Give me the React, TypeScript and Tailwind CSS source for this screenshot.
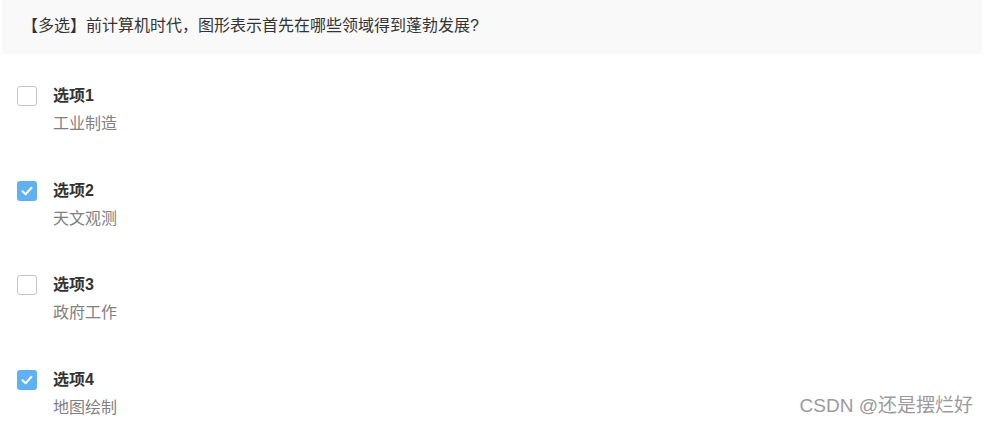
import React from 'react';

const options = [
  { label: '选项1', desc: '工业制造', checked: false },
  { label: '选项2', desc: '天文观测', checked: true },
  { label: '选项3', desc: '政府工作', checked: false },
  { label: '选项4', desc: '地图绘制', checked: true },
];

function Checkbox({ checked }: { checked: boolean }) {
  if (checked) {
    return (
      <div className="flex h-[20px] w-[20px] shrink-0 items-center justify-center rounded-[3px] bg-[#5eb1f3]">
        <svg width="14" height="14" viewBox="0 0 14 14" fill="none">
          <path d="M2.5 7.2 L5.6 10.2 L11.5 3.8" stroke="#fff" strokeWidth="2" strokeLinecap="round" strokeLinejoin="round" />
        </svg>
      </div>
    );
  }
  return <div className="h-[20px] w-[20px] shrink-0 rounded-[3px] border border-[#c4c4c4] bg-white" />;
}

export default function App() {
  return (
    <div
      className="relative h-[426px] w-[988px] overflow-hidden bg-white text-[16px] text-[#333]"
      style={{ fontFamily: '"Liberation Sans", "Noto Sans CJK SC", sans-serif' }}
    >
      <div className="mx-[2px] flex h-[54px] w-[980px] items-center bg-[#f9f9f9] pl-[20px] pb-[2px]">
        【多选】前计算机时代，图形表示首先在哪些领域得到蓬勃发展?
      </div>

      <div className="pt-[32px]">
        {options.map((o) => (
          <div key={o.label} className="flex h-[94.7px] gap-[16px] pl-[17px]">
            <Checkbox checked={o.checked} />
            <div className="flex flex-col">
              <div className="h-[20px] leading-[20px] font-bold text-[#333]">{o.label}</div>
              <div className="mt-[8px] h-[20px] leading-[20px] text-[#808080]">{o.desc}</div>
            </div>
          </div>
        ))}
      </div>

      <div className="absolute right-[15px] top-[393px] text-[19px] leading-[26px] text-[#9a9a9a]">
        CSDN @还是摆烂好
      </div>
    </div>
  );
}
